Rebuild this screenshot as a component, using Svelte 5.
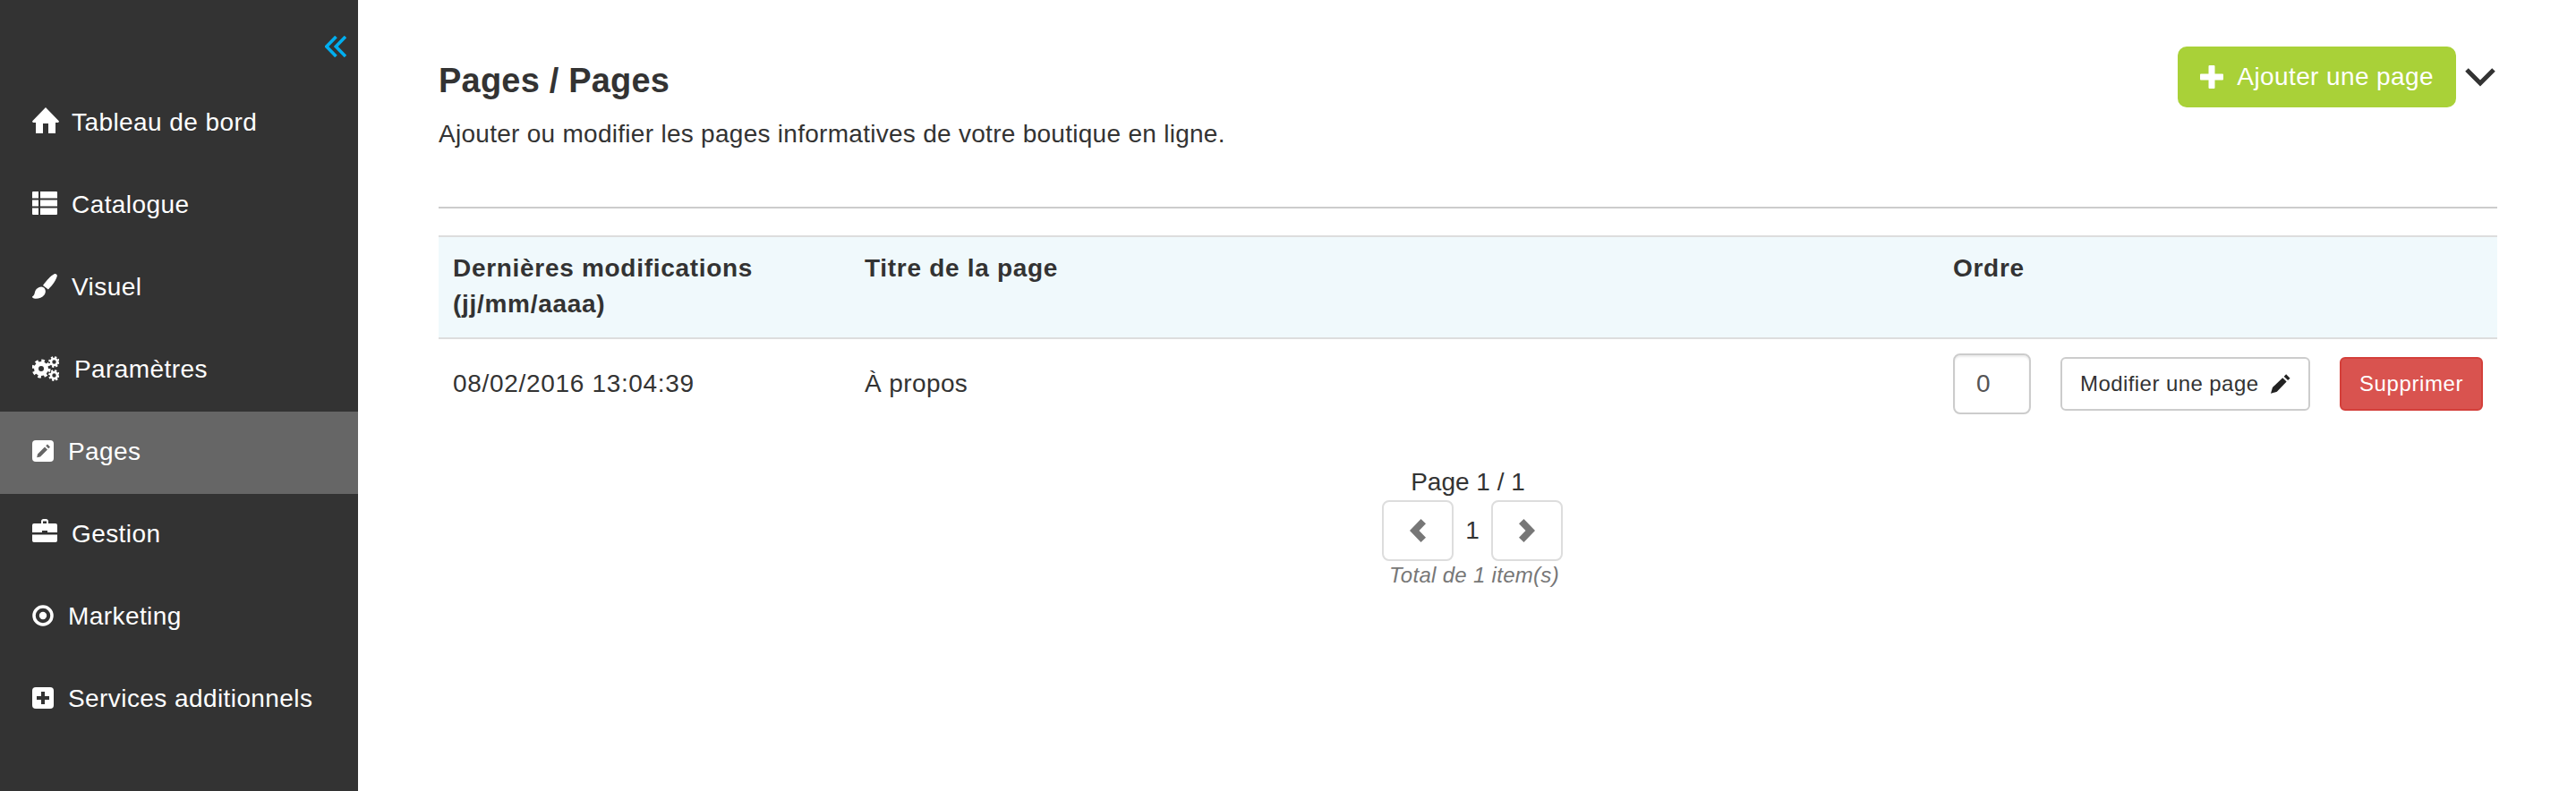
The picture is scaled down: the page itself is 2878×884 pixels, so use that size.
<script>
  const nav = [
    { label: 'Tableau de bord', icon: 'home', gap: 14, lift: 4 },
    { label: 'Catalogue', icon: 'list', gap: 16, lift: 3 },
    { label: 'Visuel', icon: 'brush', gap: 16, lift: 2 },
    { label: 'Paramètres', icon: 'cogs', gap: 17, lift: 2 },
    { label: 'Pages', icon: 'edit', active: true, gap: 16, lift: 2 },
    { label: 'Gestion', icon: 'case', gap: 16, lift: 5 },
    { label: 'Marketing', icon: 'target', gap: 16, lift: 2 },
    { label: 'Services additionnels', icon: 'plus', gap: 16, lift: 2 }
  ];
</script>

<div class="layout">
  <aside class="sidebar">
    <div class="collapse">
      <svg width="24" height="24" viewBox="0 0 24 24" fill="none" stroke="#00aeef" stroke-width="3.6">
        <path d="M12.5 1 1.8 12l10.7 11M23 1 12.3 12 23 23" />
      </svg>
    </div>
    <nav>
      {#each nav as item}
        <a class="nav-item" class:active={item.active} href="#top">
          <span class="nav-icon" style="padding-bottom: {item.lift * 2}px">
            {#if item.icon === 'home'}
              <svg width="30" height="29" viewBox="0 0 30 29" fill="#fff"><path d="M15 0l15 15.500-.8 1.500H26v12h-8V18h-6v11H4V17H.8L0 15.500z" /></svg>
            {:else if item.icon === 'list'}
              <svg width="28" height="26" viewBox="0 0 28 26" fill="#fff"><path d="M0 1a1 1 0 0 1 1-1h6v7.500H0zM9 0h18a1 1 0 0 1 1 1v6.500H9zM0 9.500h7v7H0zM9 9.500h19v7H9zM0 18.500h7V26H1a1 1 0 0 1-1-1zM9 18.500h19V25a1 1 0 0 1-1 1H9z" /></svg>
            {:else if item.icon === 'brush'}
              <svg width="28" height="28" viewBox="0 0 28 28" fill="#fff"><path d="M24.500.3c2-.9 3.600.6 3.300 2.300-.8 3.800-5 10.500-9.900 14.800l-5.900-4.400C15.500 8.200 20.600 2.200 24.500.3zM7.800 15.100c2.700-1.200 5.200-.2 6.400 1.800 1.200 2.100.6 5-.9 6.900C11 27 5.500 28.400 2 27.500.600 27.100-.4 26.100.1 25.400c2.500-1.300 2.400-3 3-5.300.6-2.300 2.200-4 4.700-5z" /></svg>
            {:else if item.icon === 'cogs'}
              <svg width="30" height="28" viewBox="0 0 30 28" fill="none" stroke="#fff">
                <circle cx="10" cy="14" r="5.500" stroke-width="5" />
                <circle cx="10" cy="14" r="8.800" stroke-width="3.400" stroke-dasharray="3.500 3.410" />
                <circle cx="24.500" cy="6.500" r="3.500" stroke-width="2.600" />
                <circle cx="24.500" cy="6.500" r="5.300" stroke-width="2.200" stroke-dasharray="2.200 1.960" />
                <circle cx="24.500" cy="21.500" r="3.500" stroke-width="2.600" />
                <circle cx="24.500" cy="21.500" r="5.300" stroke-width="2.200" stroke-dasharray="2.200 1.960" />
              </svg>
            {:else if item.icon === 'edit'}
              <svg width="24" height="24" viewBox="0 0 24 24"><rect width="24" height="24" rx="4" fill="#fff" /><path fill="#666" d="M17 4.500l3 3-1.800 1.800-3-3zM14 7.500l3 3-8 8-3.800.8.800-3.800z" /></svg>
            {:else if item.icon === 'case'}
              <svg width="28" height="26" viewBox="0 0 28 26" fill="#fff"><path d="M10 5V2.500C10 1 11.200 0 12.500 0h3C16.800 0 18 1 18 2.500V5h8a2 2 0 0 1 2 2v8H17v-2h-6v2H0V7a2 2 0 0 1 2-2zm2-2.500V5h4V2.500zM0 17.500h28V24a2 2 0 0 1-2 2H2a2 2 0 0 1-2-2z" /></svg>
            {:else if item.icon === 'target'}
              <svg width="24" height="24" viewBox="0 0 24 24" fill="#fff"><circle cx="12" cy="12" r="10" fill="none" stroke="#fff" stroke-width="3.500" /><circle cx="12" cy="12" r="4.200" /></svg>
            {:else}
              <svg width="24" height="24" viewBox="0 0 24 24"><rect width="24" height="24" rx="4" fill="#fff" /><path fill="#333" d="M10 5h4v5h5v4h-5v5h-4v-5H5v-4h5z" /></svg>
            {/if}
          </span>
          <span class="nav-label" style="margin-left: {item.gap}px">{item.label}</span>
        </a>
      {/each}
    </nav>
  </aside>

  <main class="content">
    <header class="page-head">
      <div>
        <h1>Pages / Pages</h1>
        <p>Ajouter ou modifier les pages informatives de votre boutique en ligne.</p>
      </div>
      <div class="head-actions">
        <button class="btn-add">
          <svg width="26" height="26" viewBox="0 0 26 26" fill="#fff"><path d="M9.500 1a1 1 0 0 1 1-1h5a1 1 0 0 1 1 1v8.500H25a1 1 0 0 1 1 1v5a1 1 0 0 1-1 1h-8.500V25a1 1 0 0 1-1 1h-5a1 1 0 0 1-1-1v-8.500H1a1 1 0 0 1-1-1v-5a1 1 0 0 1 1-1h8.500z" /></svg>
          Ajouter une page
        </button>
        <svg class="head-chevron" width="34" height="22" viewBox="0 0 34 22" fill="none" stroke="#333" stroke-width="5">
          <path d="M2 3 17 18 32 3" />
        </svg>
      </div>
    </header>

    <table>
      <thead>
        <tr>
          <th class="col-date">Dernières modifications<br />(jj/mm/aaaa)</th>
          <th class="col-title">Titre de la page</th>
          <th>Ordre</th>
        </tr>
      </thead>
      <tbody>
        <tr>
          <td class="date-cell">08/02/2016 13:04:39</td>
          <td>À propos</td>
          <td>
            <div class="row-actions">
              <input class="order" value="0" />
              <button class="btn-edit">
                Modifier une page
                <svg width="22" height="22" viewBox="0 0 22 22" fill="#222"><path d="M17.500 0 22 4.500l-2.500 2.500L15 2.500zM13.500 4l4.500 4.500L7 20l-7 2 2-7z" /></svg>
              </button>
              <button class="btn-delete">Supprimer</button>
            </div>
          </td>
        </tr>
      </tbody>
    </table>

    <div class="pager">
      <div>Page 1 / 1</div>
      <div class="pager-controls">
        <button class="pager-btn" aria-label="Précédent">
          <svg width="18" height="26" viewBox="0 0 18 26" fill="#777"><path d="M12.500 0 18 5.200 10.500 13 18 20.800 12.500 26 0 13z" /></svg>
        </button>
        <span class="pager-num">1</span>
        <button class="pager-btn" aria-label="Suivant">
          <svg width="18" height="26" viewBox="0 0 18 26" fill="#777"><path d="M5.500 0 0 5.200 7.500 13 0 20.800 5.500 26 18 13z" /></svg>
        </button>
      </div>
      <em class="pager-total">Total de 1 item(s)</em>
    </div>
  </main>
</div>

<style>
  :global(body) {
    margin: 0;
    background: #fff;
    font-family: "Liberation Sans", Arial, sans-serif;
    font-size: 28px;
    color: #333;
  }

  .layout {
    display: flex;
    min-height: 884px;
  }

  .sidebar {
    width: 400px;
    flex: none;
    background: #333;
  }

  .collapse {
    display: flex;
    justify-content: flex-end;
    padding: 40px 13px 0 0;
    height: 52px;
  }

  nav {
    display: flex;
    flex-direction: column;
  }

  .nav-item {
    display: flex;
    align-items: center;
    height: 92px;
    padding-left: 36px;
    color: #fff;
    text-decoration: none;
    letter-spacing: 0.42px;
  }

  .nav-item.active {
    background: #666;
  }

  .nav-icon {
    display: flex;
  }

  .nav-icon svg {
    display: block;
  }

  .nav-label {
    padding-bottom: 2px;
  }

  .content {
    flex: 1;
    padding: 52px 88px 0 90px;
    min-width: 0;
  }

  .page-head {
    display: flex;
    justify-content: space-between;
    align-items: flex-start;
    height: 179px;
    border-bottom: 2px solid #ccc;
    margin-bottom: 30px;
  }

  h1 {
    margin: 17px 0 0;
    font-size: 38px;
    line-height: 42px;
    font-weight: bold;
    letter-spacing: 0.2px;
    color: #333;
  }

  .page-head p {
    margin: 19px 0 0;
    line-height: 40px;
    letter-spacing: 0.28px;
  }

  .head-actions {
    display: flex;
    align-items: center;
    gap: 10px;
  }

  button {
    font-family: inherit;
  }

  .btn-add {
    display: flex;
    align-items: center;
    gap: 15px;
    height: 68px;
    padding: 0 25px;
    border: 0;
    border-radius: 10px;
    background: #a9d138;
    color: #fff;
    font-size: 28px;
    letter-spacing: 0.4px;
  }

  .head-chevron {
    margin-right: 2px;
  }

  table {
    width: 100%;
    table-layout: fixed;
    border-collapse: collapse;
  }

  th {
    background: #f0f9fc;
    border-top: 2px solid #ddd;
    border-bottom: 2px solid #ddd;
    padding: 15px 16px 17px;
    font-weight: bold;
    text-align: left;
    vertical-align: top;
    line-height: 40px;
    letter-spacing: 0.7px;
  }

  .col-date {
    width: 428px;
  }

  .col-title {
    width: 1184px;
  }

  td {
    padding: 16px;
    vertical-align: middle;
    line-height: 40px;
    letter-spacing: 0.4px;
  }

  .date-cell {
    letter-spacing: 0.68px;
  }

  .row-actions {
    display: flex;
    align-items: center;
    letter-spacing: 0;
  }

  .order {
    box-sizing: border-box;
    width: 87px;
    height: 68px;
    padding: 0 24px;
    border: 2px solid #ccc;
    border-radius: 8px;
    box-shadow: inset 0 2px 2px rgba(0, 0, 0, 0.075);
    font-family: inherit;
    font-size: 28px;
    color: #555;
  }

  .btn-edit {
    display: flex;
    align-items: center;
    gap: 14px;
    box-sizing: border-box;
    height: 60px;
    width: 279px;
    margin-left: 33px;
    padding: 0 20px;
    background: #fff;
    border: 2px solid #ccc;
    border-radius: 6px;
    font-size: 24px;
    letter-spacing: 0.43px;
    color: #333;
    white-space: nowrap;
  }

  .btn-delete {
    box-sizing: border-box;
    height: 60px;
    width: 160px;
    margin-left: 33px;
    padding: 0;
    background: #d9534f;
    border: 2px solid #d43f3a;
    border-radius: 6px;
    color: #fff;
    font-size: 24px;
    letter-spacing: 0.6px;
  }

  .pager {
    display: flex;
    flex-direction: column;
    align-items: center;
    margin-top: 44px;
    line-height: 32px;
  }

  .pager-controls {
    display: flex;
    align-items: center;
    margin: 4px 0 0 10px;
  }

  .pager-btn {
    display: flex;
    align-items: center;
    justify-content: center;
    box-sizing: border-box;
    width: 80px;
    height: 68px;
    padding: 0;
    background: #fff;
    border: 2px solid #ddd;
    border-radius: 8px;
  }

  .pager-num {
    width: 42px;
    text-align: center;
  }

  .pager-total {
    margin-left: 14px;
    font-size: 24px;
    letter-spacing: 0.3px;
    color: #777;
  }
</style>
